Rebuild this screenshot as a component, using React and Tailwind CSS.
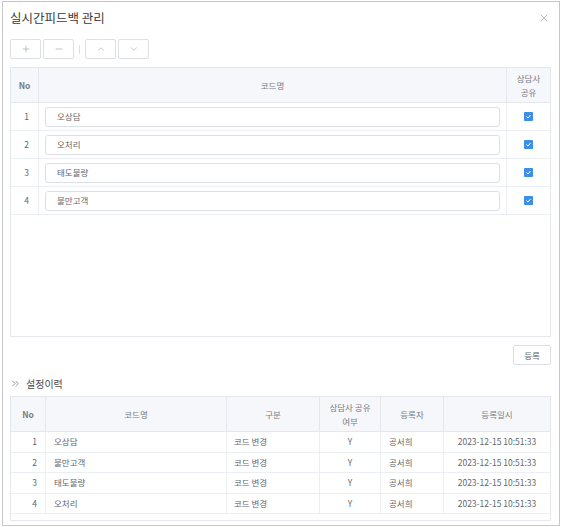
import { Plus, Minus, ChevronUp, ChevronDown, X, ChevronsRight } from "lucide-react";

const codes = ["오상담", "오처리", "태도불량", "불만고객"];

const history = [
  { no: 1, name: "오상담" },
  { no: 2, name: "불만고객" },
  { no: 3, name: "태도불량" },
  { no: 4, name: "오처리" },
];

function Check() {
  return (
    <div className="w-[9px] h-[9px] rounded-[1px] bg-[#3b8fe6] flex items-center justify-center">
      <svg width="7" height="7" viewBox="0 0 10 10" fill="none">
        <path d="M2 5.2 L4.2 7.2 L8 2.8" stroke="white" strokeWidth="1.4" />
      </svg>
    </div>
  );
}

function ToolButton({ children }) {
  return (
    <button
      type="button"
      className="w-[31px] h-[20px] border border-[#dcdfe6] rounded-[2px] bg-white flex items-center justify-center text-[#909399]"
    >
      {children}
    </button>
  );
}

export default function App() {
  return (
    <div
      className="w-[563px] h-[527px] bg-white pt-[1px] pl-[2px]"
      style={{ fontFamily: '"Noto Sans CJK KR", "Noto Sans", sans-serif' }}
    >
      <div className="w-[558px] h-[525px] border border-[#c6c6c6] pl-[7px] pr-[8px] overflow-hidden">
        {/* Title */}
        <div className="h-[32px] flex items-center justify-between">
          <h2 className="text-[12.5px] font-normal text-[#3a3a3a]">실시간피드백 관리</h2>
          <X size={12} strokeWidth={1.2} className="text-[#8a8d93] mr-[1px]" />
        </div>

        {/* Toolbar */}
        <div className="mt-[5px] flex items-center gap-[2px]">
          <ToolButton>
            <Plus size={10} strokeWidth={1.3} />
          </ToolButton>
          <ToolButton>
            <Minus size={10} strokeWidth={1.3} />
          </ToolButton>
          <div className="w-px h-[9px] bg-[#dcdfe6] mx-[3px]" />
          <ToolButton>
            <ChevronUp size={10} strokeWidth={1.3} />
          </ToolButton>
          <ToolButton>
            <ChevronDown size={10} strokeWidth={1.3} />
          </ToolButton>
        </div>

        {/* Code table */}
        <div className="mt-[8px] h-[270px] border border-[#e4e7ed] text-[8.5px] text-[#64676e]">
          <div className="grid grid-cols-[28px_1fr_43px] h-[35px] bg-[#f5f7fa] border-b border-[#e4e7ed] text-[#7a7d84]">
            <div className="flex items-center justify-center border-r border-[#e4e7ed] font-semibold">No</div>
            <div className="flex items-center justify-center border-r border-[#e4e7ed]">코드명</div>
            <div className="flex items-center justify-center text-center leading-[14px]">
              상담사
              <br />
              공유
            </div>
          </div>
          {codes.map((c, i) => (
            <div key={c} className="grid grid-cols-[28px_1fr_43px] h-[28px] border-b border-[#ebeef5]">
              <div className="flex items-center justify-end pr-[9px] border-r border-[#ebeef5]">{i + 1}</div>
              <div className="flex items-center px-[6px] border-r border-[#ebeef5]">
                <div className="w-full h-[20px] border border-[#dcdfe6] rounded-[3px] flex items-center pl-[11px]">
                  {c}
                </div>
              </div>
              <div className="flex items-center justify-center">
                <Check />
              </div>
            </div>
          ))}
        </div>

        <div className="mt-[8px] flex justify-end">
          <button
            type="button"
            className="w-[38px] h-[20px] border border-[#dcdfe6] rounded-[2px] bg-white text-[8.5px] text-[#606266]"
          >
            등록
          </button>
        </div>

        {/* History */}
        <div className="mt-[11px] h-[15px] flex items-center gap-[5px] text-[10px] text-[#4a4a4a]">
          <ChevronsRight size={11} strokeWidth={1.3} className="text-[#555]" />
          <span>설정이력</span>
        </div>

        <div className="mt-[5px] h-[125px] border border-[#e4e7ed] text-[8.5px] text-[#64676e]">
          <div className="grid grid-cols-[35px_181px_93px_61px_63px_1fr] h-[35px] bg-[#f5f7fa] border-b border-[#e4e7ed] text-[#7a7d84]">
            <div className="flex items-center justify-center border-r border-[#e4e7ed] font-semibold">No</div>
            <div className="flex items-center justify-center border-r border-[#e4e7ed]">코드명</div>
            <div className="flex items-center justify-center border-r border-[#e4e7ed]">구분</div>
            <div className="flex items-center justify-center border-r border-[#e4e7ed] text-center leading-[14px]">
              상담사 공유
              <br />
              여부
            </div>
            <div className="flex items-center justify-center border-r border-[#e4e7ed]">등록자</div>
            <div className="flex items-center justify-center">등록일시</div>
          </div>
          {history.map((h) => (
            <div
              key={h.no}
              className="grid grid-cols-[35px_181px_93px_61px_63px_1fr] h-[20.5px] border-b border-[#ebeef5]"
            >
              <div className="flex items-center justify-end pr-[8px] border-r border-[#ebeef5]">{h.no}</div>
              <div className="flex items-center pl-[8px] border-r border-[#ebeef5]">{h.name}</div>
              <div className="flex items-center pl-[7px] border-r border-[#ebeef5]">코드 변경</div>
              <div className="flex items-center justify-center border-r border-[#ebeef5]">Y</div>
              <div className="flex items-center pl-[8px] border-r border-[#ebeef5]">공서희</div>
              <div className="flex items-center justify-center">2023-12-15 10:51:33</div>
            </div>
          ))}
        </div>
      </div>
    </div>
  );
}
